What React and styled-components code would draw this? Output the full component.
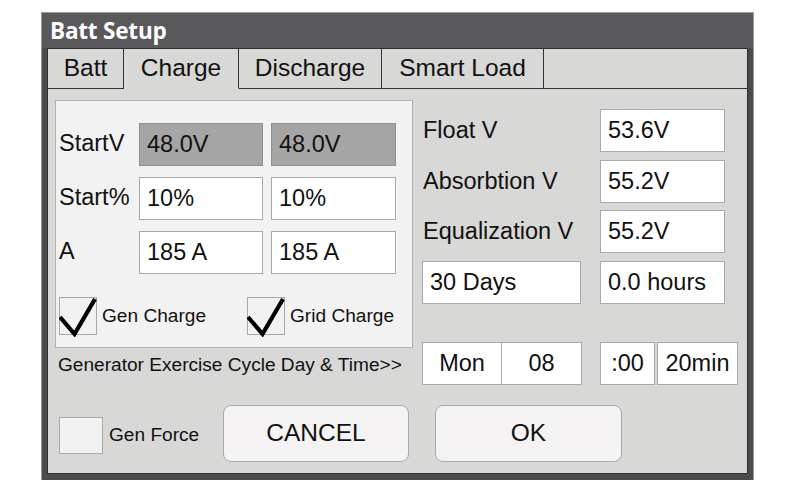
import React from 'react';
import styled, { createGlobalStyle } from 'styled-components';

const GlobalStyle = createGlobalStyle`
  body {
    margin: 0;
    background: #ffffff;
    font-family: "Liberation Sans", Arial, sans-serif;
    color: #111;
  }
`;

const Window = styled.div`
  width: 711px;
  height: 467px;
  margin: 13px 0 0 42px;
  display: flex;
  flex-direction: column;
  background: #4b4b4d;
  box-shadow: 0 0 0 1px #9a9a9a;
`;

const TitleBar = styled.div`
  height: 35px;
  flex: none;
  display: flex;
  align-items: center;
  padding-left: 8px;
  background: #59595b;
  color: #fff;
  font-family: "Open Sans", "Noto Sans", sans-serif;
  font-weight: 700;
  font-size: 22.5px;
  letter-spacing: -0.2px;
`;

const Frame = styled.div`
  flex: 1;
  padding: 0 5px 6px 5px;
  display: flex;
`;

const Content = styled.div`
  flex: 1;
  display: flex;
  flex-direction: column;
  border: 1px solid #2e2e2e;
  background: #d8d8d6;
`;

const TabStrip = styled.div`
  display: flex;
  height: 40px;
  flex: none;
`;

const Tab = styled.div`
  width: ${(p) => p.$w}px;
  flex: none;
  display: flex;
  align-items: center;
  justify-content: center;
  font-size: 24.5px;
  padding-bottom: 2px;
  border-right: 1px solid #333;
  border-bottom: 1px solid ${(p) => (p.$active ? 'transparent' : '#333')};
  box-sizing: border-box;
`;

const TabFiller = styled.div`
  flex: 1;
  border-bottom: 1px solid #333;
`;

const Body = styled.div`
  padding: 11px 0 0 7px;
  display: flex;
  flex-direction: column;
`;

const TopSection = styled.div`
  display: flex;
  align-items: flex-start;
`;

const LeftColumn = styled.div`
  display: flex;
  flex-direction: column;
`;

const Panel = styled.div`
  width: 358px;
  height: 248px;
  box-sizing: border-box;
  border: 1px solid #b2b2b2;
  background: #f3f2f2;
  padding: 22px 0 0 3px;
`;

const ValueGrid = styled.div`
  display: grid;
  grid-template-columns: 72px 124px 125px;
  grid-auto-rows: 43px;
  column-gap: 8px;
  row-gap: 11px;
  align-items: center;
`;

const Label = styled.span`
  font-size: ${(p) => p.$size || 23.5}px;
  white-space: nowrap;
  padding-left: ${(p) => p.$pad || 0}px;
  padding-bottom: ${(p) => p.$lift || 0}px;
`;

const Field = styled.div`
  height: 43px;
  box-sizing: border-box;
  display: flex;
  align-items: center;
  justify-content: ${(p) => (p.$center ? 'center' : 'flex-start')};
  padding-left: ${(p) => (p.$center ? 0 : 7)}px;
  width: ${(p) => (p.$w ? `${p.$w}px` : 'auto')};
  background: ${(p) => (p.$dim ? '#a6a5a5' : '#fff')};
  border: 1px solid ${(p) => (p.$dim ? '#8f8f8f' : '#a9a9a9')};
  font-size: 23.5px;
`;

const CheckRow = styled.div`
  display: flex;
  margin-top: 23px;
`;

const CheckItem = styled.div`
  display: flex;
  align-items: center;
  gap: 5px;
  width: ${(p) => (p.$w ? `${p.$w}px` : 'auto')};
`;

const Box = styled.div`
  width: ${(p) => p.$w || 38}px;
  height: ${(p) => p.$h || 38}px;
  flex: none;
  box-sizing: border-box;
  border: 1px solid #a9a9a9;
  background: #f3f2f2;
  position: relative;
  overflow: visible;

  svg {
    position: absolute;
    left: -1px;
    top: -1px;
  }
`;

const ExerciseLabel = styled.div`
  margin-top: 6px;
  padding-left: 3px;
  font-size: 19.1px;
  line-height: 22px;
  white-space: nowrap;
`;

const RightColumn = styled.div`
  margin-left: 9px;
  padding-top: 9px;
  display: flex;
  flex-direction: column;
`;

const SettingsGrid = styled.div`
  display: grid;
  grid-template-columns: 159px 125px;
  grid-auto-rows: 43px;
  column-gap: 19px;
  row-gap: 7.6px;
  align-items: center;
`;

const ExerciseRow = styled.div`
  margin-top: 38px;
  display: flex;
  align-items: center;
`;

const Joined = styled.div`
  display: flex;
  height: 43px;
  box-sizing: border-box;
  border: 1px solid #a9a9a9;
  background: #fff;
`;

const Cell = styled.div`
  width: ${(p) => p.$w}px;
  display: flex;
  align-items: center;
  justify-content: center;
  font-size: 23.5px;
  & + & {
    border-left: 1px solid #a9a9a9;
  }
`;

const TimeGroup = styled.div`
  display: flex;
  gap: 2px;
  margin-left: 18px;
`;

const BottomRow = styled.div`
  margin-top: 20px;
  padding-left: 4px;
  display: flex;
  align-items: flex-start;
`;

const ForceItem = styled.div`
  width: 164px;
  padding-top: 12px;
  display: flex;
  align-items: center;
  gap: 6px;
`;

const Button = styled.button`
  width: ${(p) => p.$w}px;
  height: 57px;
  margin-right: 26px;
  border: 1px solid #a9a9a9;
  border-radius: 8px;
  background: #f4f2f2;
  font-family: "Liberation Sans", Arial, sans-serif;
  font-size: 24.5px;
  color: #111;
  padding: 0;
`;

const Check = () => (
  <svg width="40" height="40" viewBox="0 0 40 40">
    <path
      d="M1 20 L15.5 37 L36 2"
      fill="none"
      stroke="#000"
      strokeWidth="4.2"
      strokeLinejoin="miter"
    />
  </svg>
);

const tabs = [
  { name: 'Batt', w: 76 },
  { name: 'Charge', w: 115, active: true },
  { name: 'Discharge', w: 143 },
  { name: 'Smart Load', w: 162 },
];

const startRows = [
  { label: 'StartV', values: ['48.0V', '48.0V'], dim: true },
  { label: 'Start%', values: ['10%', '10%'] },
  { label: 'A', values: ['185 A', '185 A'] },
];

const settings = [
  { label: 'Float V', value: '53.6V' },
  { label: 'Absorbtion V', value: '55.2V' },
  { label: 'Equalization V', value: '55.2V' },
];

export default function App() {
  return (
    <>
      <GlobalStyle />
      <Window>
        <TitleBar>Batt Setup</TitleBar>
        <Frame>
          <Content>
            <TabStrip>
              {tabs.map((t) => (
                <Tab key={t.name} $w={t.w} $active={t.active}>
                  {t.name}
                </Tab>
              ))}
              <TabFiller />
            </TabStrip>
            <Body>
              <TopSection>
                <LeftColumn>
                  <Panel>
                    <ValueGrid>
                      {startRows.map((r) => (
                        <React.Fragment key={r.label}>
                          <Label $lift={3}>{r.label}</Label>
                          {r.values.map((v, i) => (
                            <Field key={i} $dim={r.dim}>
                              {v}
                            </Field>
                          ))}
                        </React.Fragment>
                      ))}
                    </ValueGrid>
                    <CheckRow>
                      <CheckItem $w={188}>
                        <Box>
                          <Check />
                        </Box>
                        <Label $size={19.1}>Gen Charge</Label>
                      </CheckItem>
                      <CheckItem>
                        <Box>
                          <Check />
                        </Box>
                        <Label $size={19.1}>Grid Charge</Label>
                      </CheckItem>
                    </CheckRow>
                  </Panel>
                  <ExerciseLabel>Generator Exercise Cycle Day &amp; Time&gt;&gt;</ExerciseLabel>
                </LeftColumn>
                <RightColumn>
                  <SettingsGrid>
                    {settings.map((s) => (
                      <React.Fragment key={s.label}>
                        <Label $pad={1}>{s.label}</Label>
                        <Field>{s.value}</Field>
                      </React.Fragment>
                    ))}
                    <Field>30 Days</Field>
                    <Field>0.0 hours</Field>
                  </SettingsGrid>
                  <ExerciseRow>
                    <Joined>
                      <Cell $w={78}>Mon</Cell>
                      <Cell $w={79}>08</Cell>
                    </Joined>
                    <TimeGroup>
                      <Field $center $w={55}>:00</Field>
                      <Field $center $w={81}>20min</Field>
                    </TimeGroup>
                  </ExerciseRow>
                </RightColumn>
              </TopSection>
              <BottomRow>
                <ForceItem>
                  <Box $w={44} $h={37} />
                  <Label $size={19.1}>Gen Force</Label>
                </ForceItem>
                <Button $w={186}>CANCEL</Button>
                <Button $w={187}>OK</Button>
              </BottomRow>
            </Body>
          </Content>
        </Frame>
      </Window>
    </>
  );
}
